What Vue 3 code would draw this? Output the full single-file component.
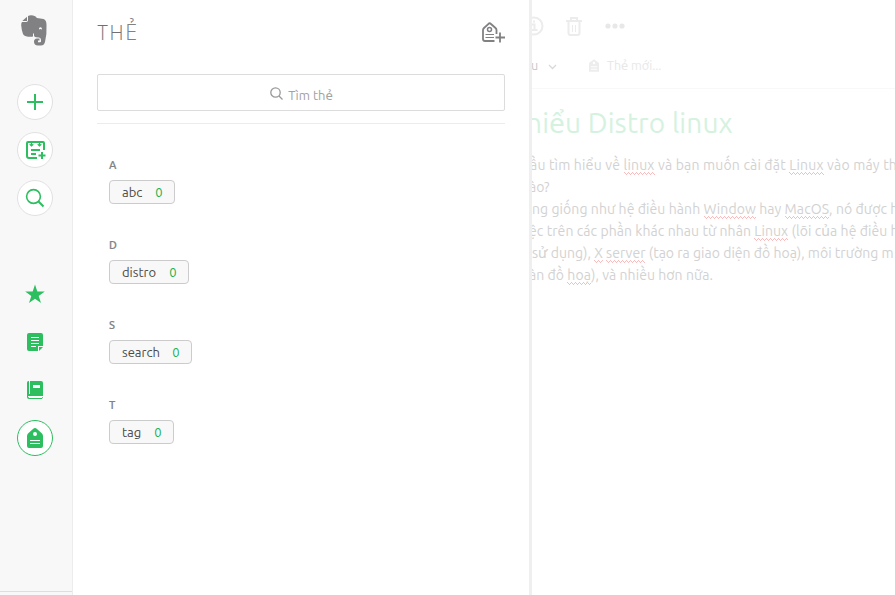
<script setup>
const groups = [
  { letter: 'A', name: 'abc', width: 66 },
  { letter: 'D', name: 'distro', width: 80 },
  { letter: 'S', name: 'search', width: 83 },
  { letter: 'T', name: 'tag', width: 65 }
]
</script>

<template>
  <div class="app">
    <aside class="sidebar">
      <svg class="logo" width="26" height="31" viewBox="0 0 26 31">
        <path fill="#818184" d="M7 1v4.2Q7 7 5.2 7H1Q0 8 .2 10.500Q.7 16 2 19Q2.700 20.600 4.200 21Q9 22.400 12 21.500V18.500H13V20.500Q13.200 22 15 22.300L18 22.600Q20 22.900 20 25V26.500Q20 27.300 19 27.300H17V25.500H18.500V23.600H16Q13 23.800 13 26.800Q13 30.500 17 30.500H20Q23 30.500 24 27Q26 19 25.500 10Q25.500 5 22.500 4L16 3Q14.500 .6 12 .5Q9 0 7 1ZM18 13.600Q18.700 11.500 20.300 12.500Q21 13 21 14.500Q19.500 13.700 18 14.400Z" />
        <path fill="#818184" d="M6 1.800V6H1.300Z" />
      </svg>
      <nav class="nav">
        <button class="round first">
          <svg width="18" height="18" viewBox="0 0 18 18"><path d="M9 1v16M1 9h16" stroke="#2dbe60" stroke-width="2" /></svg>
        </button>
        <button class="round">
          <svg class="newnote" width="22" height="20" viewBox="0 0 22 20" fill="none" stroke="#2dbe60" stroke-width="2">
            <path d="M12 18H4Q2 18 2 16V3Q2 2 3 2H18Q19 2 19 3V10M6 10h9M6 14h5M17 12v7M13.500 15.500h7" />
            <path stroke-width="1.200" d="M6.500 2v3.500M4.700 4.300l1.800 1.700 1.800-1.700M14.500 2v3.500M12.700 4.300l1.800 1.700 1.800-1.700" />
          </svg>
        </button>
        <button class="round">
          <svg width="20" height="20" viewBox="0 0 20 20" fill="none" stroke="#2dbe60"><circle cx="8.500" cy="8.500" r="6.900" stroke-width="1.600" /><path stroke-width="2" d="m13.300 13.300 5.200 5.200" /></svg>
        </button>
        <button class="round plain star">
          <svg width="20" height="20" viewBox="0 0 20 20"><path fill="#2dbe60" d="m10 .5 2.300 7.100h7.500l-6.100 4.400L16 19.100l-6-4.400-6 4.400L6.300 12 .2 7.600h7.500Z" /></svg>
        </button>
        <button class="round plain">
          <svg width="16" height="18" viewBox="0 0 16 18"><path fill="#2dbe60" d="M2 0h12q2 0 2 2v11h-5v5H2q-2 0-2-2V2q0-2 2-2Z" /><path fill="#2dbe60" d="M12 14h4l-4 4Z" /><path d="M4 4.500h8M4 7.500h8M4 10.500h8M4 13.500h5" stroke="#fff" /></svg>
        </button>
        <button class="round plain">
          <svg width="16" height="18" viewBox="0 0 16 18"><path fill="#2dbe60" d="M1.500 0H14q2 0 2 2v14l-1 2H2q-2 0-2-2V1.500Q0 0 1.500 0Z" /><path d="M2.500 0v13M1.500 15.500H16" stroke="#fff" /><path fill="#fff" d="M6 4h7v3H6ZM1 15h14v2H2Z" /></svg>
        </button>
        <button class="round active">
          <svg width="16" height="20" viewBox="0 0 16 20"><path fill="#2dbe60" d="M8 0Q9 0 10 1l5 4.500q1 1 1 2.500v10q0 2-2 2H2q-2 0-2-2V8q0-1.500 1-2.500L6 1q1-1 2-1Z" /><circle cx="8" cy="6" r="2" fill="#fff" /><path d="M3 12.500h10M3 15.500h10" stroke="#fff" /></svg>
        </button>
      </nav>
      <div class="account"></div>
    </aside>

    <section class="tags">
      <header class="head">
        <h1>TH<span>Ẻ</span></h1>
        <svg width="23" height="21" viewBox="0 0 23 21" fill="none" stroke="#818184">
          <path stroke-width="1.800" d="M12.500 19H3q-2 0-2-2V8q0-1 1-2l4.500-4Q7.500 .5 9 2L13.500 6q1 1 1 2v4M18 10.500v10M13.500 15.500h9.500" />
          <circle cx="7.500" cy="7.500" r="2" stroke-width="1.500" />
          <path d="M3.500 12.500h8.500M3.500 15.500h8.500" />
        </svg>
      </header>
      <div class="search">
        <svg width="13" height="13" viewBox="0 0 13 13" fill="none" stroke="#999" stroke-width="1.300"><circle cx="5.500" cy="5.500" r="4.700" /><path d="m9 9 3.500 3.500" /></svg>
        <span>Tìm thẻ</span>
      </div>
      <div class="groups">
        <div v-for="g in groups" :key="g.letter" class="group">
          <h2>{{ g.letter }}</h2>
          <div class="tag" :style="{ width: g.width + 'px' }">
            <span>{{ g.name }}</span><b>0</b>
          </div>
        </div>
      </div>
    </section>

    <main class="note">
      <div class="tools">
        <svg class="info" width="20" height="20" viewBox="0 0 20 20" fill="none" stroke="#ececec" stroke-width="2"><circle cx="10" cy="10" r="8.500" /><path d="M8 8.500h2.500V14M7.500 14h6M9 5.500h2" /></svg>
        <svg class="trash" width="18" height="19" viewBox="0 0 18 19" fill="none" stroke="#ececec" stroke-width="2"><path d="M1 4h16M6 4V1h6v3M3.500 5v11q0 2 2 2h7q2 0 2-2V5" /><path stroke-width="1" d="M7.500 8v7M10.500 8v7" /></svg>
        <svg class="dots" width="20" height="6" viewBox="0 0 20 6" fill="#e8e8e8"><circle cx="3" cy="3" r="2.600" /><circle cx="10" cy="3" r="2.600" /><circle cx="17" cy="3" r="2.600" /></svg>
      </div>
      <div class="meta">
        <span class="book">u</span>
        <svg class="chev" width="9" height="6" viewBox="0 0 9 6"><path d="m1 1 3.500 3.500L8 1" fill="none" stroke="#d9d9d9" stroke-width="1.300" /></svg>
        <svg class="mini" width="10" height="13" viewBox="0 0 16 20"><path fill="#ededed" d="M8 0 16 6v14H0V6Z" /><circle cx="8" cy="6" r="2" fill="#fff" /><path d="M3 12h10M3 16h10" stroke="#fff" stroke-width="1.500" /></svg>
        <span class="new">Thẻ mới...</span>
      </div>
      <h3>hiểu Distro linux</h3>
      <div class="text">
        <p class="l1">ầu tìm hiểu về <u>linux</u> và bạn muốn cài đặt <u>Linux</u> vào máy th</p>
        <p class="l2">ào?</p>
        <p class="l3">ng giống như hệ điều hành <u>Window</u> hay <u>MacOS</u>, nó được h</p>
        <p class="l4">ệc trên các phần khác nhau từ nhân <u>Linux</u> (lõi của hệ điều h</p>
        <p class="l5">sử dụng), <u>X</u> <u>server</u> (tạo ra giao diện đồ hoạ), môi trường m</p>
        <p class="l6">àn đồ <u>hoạ</u>), và nhiều hơn nữa.</p>
      </div>
    </main>
  </div>
</template>

<style>
body { margin: 0; overflow: hidden; }
</style>

<style scoped>
* { box-sizing: border-box; }
.app { display: flex; width: 895px; height: 595px; overflow: hidden; background: #fff; font-family: Ubuntu, "Noto Sans", sans-serif; }
svg { display: block; flex: none; }
h1, h2, h3, p { margin: 0; font-weight: 400; }
.sidebar { width: 73px; flex: none; background: #f8f8f8; border-right: 1px solid #ececec; display: flex; flex-direction: column; }
.logo { margin: 15px 0 0 21px; }
.nav { display: flex; flex-direction: column; gap: 12px; padding: 38px 0 0 17px; }
.round { width: 36px; height: 36px; padding: 0; border: 1px solid #e1e1e1; border-radius: 50%; background: #fff; display: flex; align-items: center; justify-content: center; }
.newnote { margin-left: 1px; }
.plain { border-color: transparent; background: none; }
.star { margin-top: 48px; }
.active { border-color: #2dbe60; }
.account { margin-top: auto; height: 4px; border-top: 1px solid #dedede; }
.tags { width: 459px; flex: none; border-right: 3px solid #efefef; padding: 0 24px; }
.head { height: 74px; display: flex; justify-content: space-between; align-items: flex-start; }
.head h1 { font-family: "Open Sans", sans-serif; font-weight: 300; font-size: 19.500px; line-height: 28px; letter-spacing: 1.700px; color: #707074; margin: 19px 0 0 .500px; }
.head h1 span { font-size: 21.500px; line-height: 20px; color: #818184; }
.head svg { margin-top: 22px; }
.search { height: 37px; border: 1px solid #dcdcdc; border-radius: 2px; display: flex; align-items: center; justify-content: center; gap: 5px; padding-left: 1px; font-size: 13px; color: #a2a2a2; }
.search svg { margin-top: 2px; }
.search span { padding-top: 4px; }
.groups { margin-top: 12px; border-top: 1px solid #ececec; padding: 34px 12px 0; }
.group { height: 80px; }
.group h2 { height: 22px; font-size: 11px; line-height: 14px; font-weight: 500; color: #818184; -webkit-text-stroke: .2px #818184; }
.tag { height: 24px; border: 1px solid #ccc; border-radius: 4px; background: #f8f8f8; padding: 0 11.500px 0 12px; display: flex; justify-content: space-between; align-items: center; font-size: 13px; color: #4a4a4a; }
.tag b { font-weight: 400; color: #20b050; }
.note { flex: 1; min-width: 0; overflow: hidden; }
.tools { height: 54px; padding-bottom: 2px; display: flex; align-items: center; }
.info { margin-left: -8px; }
.trash { margin-left: 21px; }
.dots { margin-left: 22px; }
.meta { height: 35px; border-bottom: 1px solid #f8f8f8; display: flex; align-items: center; padding-bottom: 12px; font-size: 12.500px; color: #e8e8e8; }
.book { width: 7px; margin-left: -1px; color: #c8c8c8; }
.chev { margin: 3px 0 0 10px; }
.mini { margin-left: 32px; }
.new { margin-left: 8px; }
h3 { font-size: 28px; line-height: 38px; height: 65px; padding-top: 15px; margin-left: -6px; letter-spacing: .15px; color: #d5f2df; white-space: nowrap; }
.text { font-size: 14px; line-height: 22px; color: #d2d2d2; }
.text p { height: 22px; white-space: nowrap; }
u {
  display: inline-block;
  height: 21px;
  vertical-align: top;
  text-decoration: none;
  background:
    linear-gradient(90deg, #f9bcbc 1px, transparent 1px) 0 18px / 4px 1px repeat-x,
    linear-gradient(90deg, transparent 1px, #f9bcbc 1px) 0 19px / 2px 1px repeat-x,
    linear-gradient(90deg, transparent 2px, #f9bcbc 2px, #f9bcbc 3px, transparent 3px) 0 20px / 4px 1px repeat-x;
}
.l1 { margin-left: -2px; letter-spacing: .18px; }
.l2 { margin-left: -3px; }
.l3 { letter-spacing: .08px; }
.l4 { margin-left: -3px; letter-spacing: .07px; }
.l5 { letter-spacing: .02px; }
.l6 { margin-left: -3px; letter-spacing: .06px; }
</style>
